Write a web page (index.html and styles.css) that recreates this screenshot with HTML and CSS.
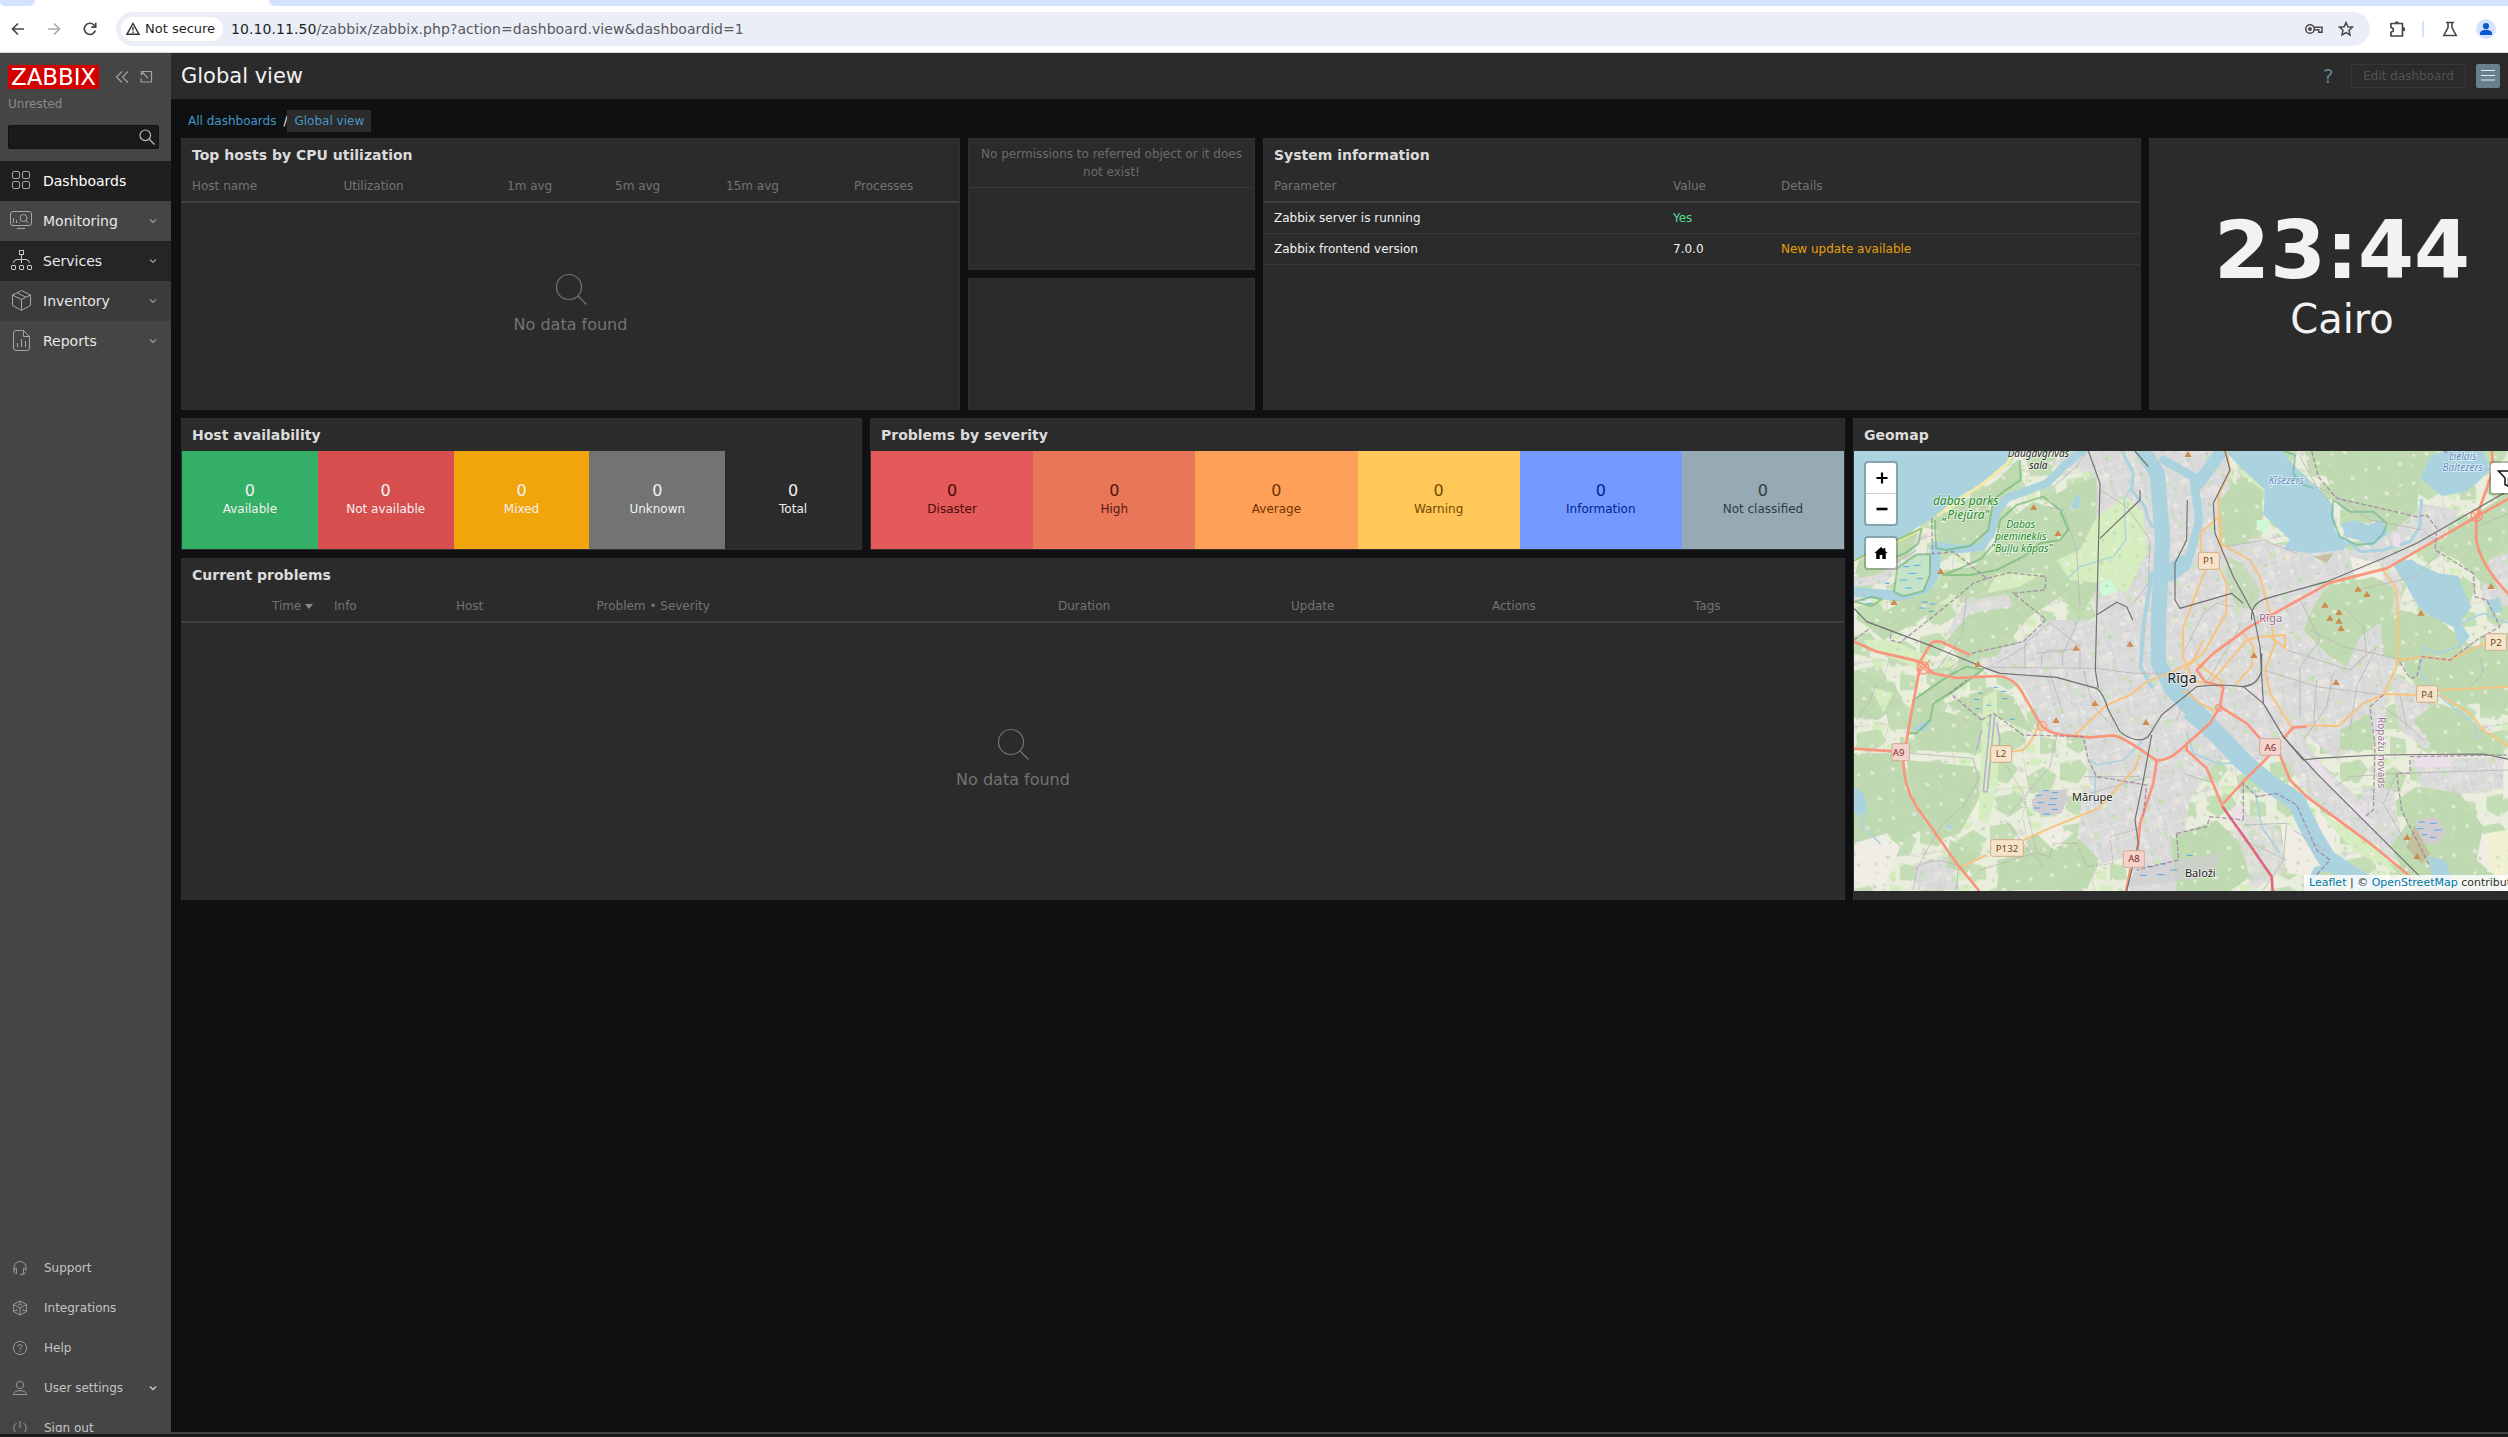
FILE: index.html
```html
<!DOCTYPE html>
<html lang="en">
<head>
<meta charset="utf-8">
<title>Global view</title>
<link rel="stylesheet" href="styles.css">
</head>
<body>
<div class="browser">
  <div class="tabstrip"><span class="tab-prev"></span><span class="tab-active"></span><span class="tab-rest"></span></div>
  <div class="toolbar">
    <div class="nav-icons">
      <svg width="20" height="20" viewBox="0 0 20 20"><path d="M16 10H5M10 4.500L4.500 10l5.500 5.500" fill="none" stroke="#474747" stroke-width="1.700"/></svg>
      <svg width="20" height="20" viewBox="0 0 20 20"><path d="M4 10h11M10 4.500l5.500 5.500-5.500 5.500" fill="none" stroke="#a9a9a9" stroke-width="1.700"/></svg>
      <svg width="20" height="20" viewBox="0 0 20 20"><path d="M15.300 11.500A5.600 5.600 0 1 1 14 6l1.500 1.500M15.700 3.800v4.400h-4.400" fill="none" stroke="#474747" stroke-width="1.700"/></svg>
    </div>
    <div class="omnibox">
      <div class="secure">
        <svg width="16" height="16" viewBox="0 0 16 16"><path d="M8 2.500L14 13.200H2z" fill="none" stroke="#333" stroke-width="1.500"/><path d="M8 6v3.500M8 10.500V12" stroke="#333" stroke-width="1.400"/></svg>
        <span>Not secure</span>
      </div>
      <div class="url"><b>10.10.11.50</b>/zabbix/zabbix.php?action=dashboard.view&amp;dashboardid=1</div>
      <svg class="key" width="20" height="20" viewBox="0 0 20 20"><g fill="none" stroke="#474747" stroke-width="1.500"><circle cx="6" cy="10" r="4.300"/><path d="M10 8.300h8v5h-3.300v-2.600H10.200"/></g><circle cx="6" cy="10" r="1.900" fill="#474747"/></svg>
      <svg class="star" width="18" height="18" viewBox="0 0 18 18"><path d="M9 2.500l1.900 4.300 4.600.4-3.500 3.100 1 4.600L9 12.500l-4 2.400 1-4.600L2.500 7.200l4.600-.4z" fill="none" stroke="#474747" stroke-width="1.500"/></svg>
    </div>
    <svg class="puzzle" width="20" height="20" viewBox="0 0 20 20"><path d="M3 4.500h11.500v12.500H3v-3.800l2.200-1.200v-2.500L3 8.500z" fill="none" stroke="#474747" stroke-width="1.700" stroke-linejoin="round"/><path d="M7 4V2.500h3.500V4zM15 8.500h2v3.500h-2z" fill="#474747"/></svg>
    <span class="tb-sep"></span>
    <svg class="flask" width="18" height="18" viewBox="0 0 18 18"><path d="M5 2.500h8M7 2.500v5L2.800 15.500h12.400L11 7.500v-5" fill="none" stroke="#474747" stroke-width="1.600"/></svg>
    <svg class="avatar" width="20" height="20" viewBox="0 0 20 20"><circle cx="10" cy="10" r="10" fill="#d3e3fd"/><circle cx="10" cy="7" r="3.100" fill="#0b57d0"/><path d="M4 16v-1.500c0-5 12-5 12 0V16z" fill="#0b57d0"/></svg>
  </div>
</div>

<div class="app">
  <aside class="sidebar">
    <div class="brand">
      <div class="logo">ZABBIX</div>
      <svg class="collapse" width="40" height="16" viewBox="0 0 40 16"><path d="M8 2.500L2.500 8 8 13.500M14 2.500L8.500 8l5.500 5.500M31 2.500h6.500V13H27V9.500M27.500 2.500l6.500 6.500M27.500 6.500v-4h4" fill="none" stroke="#a2a2a2" stroke-width="1.200"/></svg>
    </div>
    <div class="server">Unrested</div>
    <div class="search"><svg width="18" height="18" viewBox="0 0 18 18"><circle cx="7.300" cy="7.300" r="5.300" fill="none" stroke="#b8b8b8" stroke-width="1.200"/><path d="M11 11l5.500 5.500" stroke="#b8b8b8" stroke-width="1.200"/></svg></div>
    <nav class="menu">
      <div class="item active"><svg class="ico" width="24" height="24" viewBox="0 0 24 24"><rect x="3.500" y="2.500" width="7" height="7" rx="1.500"/><rect x="13.500" y="2.500" width="7" height="7" rx="1.500"/><rect x="3.500" y="12.500" width="7" height="7" rx="1.500"/><rect x="13.500" y="12.500" width="7" height="7" rx="1.500"/></svg><span>Dashboards</span></div>
      <div class="item"><svg class="ico" width="24" height="24" viewBox="0 0 24 24"><rect x="1.500" y="2.500" width="21" height="14" rx="2.500"/><path d="M8 19.500h8M4.500 14V9M7.500 14v-3M10.500 14v-1"/><circle cx="14.500" cy="9" r="3.500"/><path d="M17 11.500l2.500 2.500"/></svg><span>Monitoring</span><svg class="chev" width="8" height="6" viewBox="0 0 8 6"><path d="M1 1.500l3 3 3-3"/></svg></div>
      <div class="item services"><svg class="ico bright" width="24" height="24" viewBox="0 0 24 24"><rect x="10.500" y="1.500" width="4" height="4"/><rect x="2.500" y="16.500" width="4" height="4" rx=".5"/><rect x="10.500" y="16.500" width="4" height="4" rx=".5"/><rect x="18.500" y="16.500" width="4" height="4" rx=".5"/><path d="M12.500 5.500V14M4.500 14q0-3.500 3.500-3.500h9q3.500 0 3.500 3.500"/></svg><span>Services</span><svg class="chev" width="8" height="6" viewBox="0 0 8 6"><path d="M1 1.500l3 3 3-3"/></svg></div>
      <div class="item inventory"><svg class="ico" width="24" height="24" viewBox="0 0 24 24"><path d="M12.500 1.500l9 4.500v10.500l-9 4.800-9-4.800V6zM3.500 6l9 4.500L21.500 6M12.500 10.500v10.500M8 3.800l9 4.500"/></svg><span>Inventory</span><svg class="chev" width="8" height="6" viewBox="0 0 8 6"><path d="M1 1.500l3 3 3-3"/></svg></div>
      <div class="item"><svg class="ico" width="24" height="24" viewBox="0 0 24 24"><path d="M14.500 1.500H7q-2.500 0-2.500 2.500v15q0 2.500 2.500 2.500h11q2.500 0 2.500-2.500V7.500zM14.500 1.500v6h6M8.500 18v-4M12.500 18v-8M16.500 18v-6"/></svg><span>Reports</span><svg class="chev" width="8" height="6" viewBox="0 0 8 6"><path d="M1 1.500l3 3 3-3"/></svg></div>
    </nav>
    <nav class="menu menu-user">
      <div class="item"><svg class="ico" width="16" height="16" viewBox="0 0 16 16"><path d="M2 11V7.500a6 6 0 0 1 12 0V11M2 8.500h2.500v5H3.500Q2 13.500 2 11zM14 8.500h-2.500v5h1M13.500 12v.5q0 2-5.500 2"/></svg><span>Support</span></div>
      <div class="item"><svg class="ico" width="16" height="16" viewBox="0 0 16 16"><path d="M8 1l6.500 3.500v7L8 15l-6.500-3.500v-7zM1.500 4.500L8 8l6.500-3.500M8 8v7M4 9.500l1.500 1M12 9.500l-1.500 1M1.500 11.500L5 9.500M14.500 11.500L11 9.500M8 1v2.500M6 5l2-1 2 1"/></svg><span>Integrations</span></div>
      <div class="item"><svg class="ico" width="16" height="16" viewBox="0 0 16 16"><circle cx="8" cy="8" r="6.600"/><path d="M6 6.500Q6 4.500 8 4.500t2 1.800Q10 7.500 8 8.500v1.300M8 11v1.200"/></svg><span>Help</span></div>
      <div class="item"><svg class="ico" width="16" height="16" viewBox="0 0 16 16"><circle cx="8" cy="5" r="3.600"/><path d="M1.500 14.500v-1Q3 10.500 8 10.500t6.500 3v1z"/></svg><span>User settings</span><svg class="chev light" width="8" height="6" viewBox="0 0 8 6"><path d="M1 1.500l3 3 3-3"/></svg></div>
      <div class="item"><svg class="ico" width="16" height="16" viewBox="0 0 16 16"><path d="M8 1v7M4.500 3a6.200 6.200 0 1 0 7 0"/></svg><span>Sign out</span></div>
    </nav>
  </aside>

  <main class="main">
    <header class="header">
      <h1>Global view</h1>
      <span class="help">?</span>
      <button class="edit">Edit dashboard</button>
      <button class="burger"><svg width="24" height="24" viewBox="0 0 24 24"><path d="M5 6.500h14M5 11.500h14M5 16h14" stroke="#e6ebee" stroke-width="1"/></svg></button>
    </header>
    <div class="crumbs"><a>All dashboards</a><i>/</i><a class="current">Global view</a></div>

    <div class="dashboard">
      <div class="row top">
        <section class="widget w-hosts">
          <h2>Top hosts by CPU utilization</h2>
          <div class="thead hosts-cols"><span>Host name</span><span>Utilization</span><span>1m avg</span><span>5m avg</span><span>15m avg</span><span>Processes</span></div>
          <div class="nodata"><svg width="34" height="34" viewBox="0 0 34 34"><circle cx="15" cy="15" r="12.500"/><path d="M24 24l8.500 8.500"/></svg><span>No data found</span></div>
        </section>
        <div class="stack">
          <section class="widget"><p class="noperm">No permissions to referred object or it does not exist!</p></section>
          <section class="widget"></section>
        </div>
        <section class="widget w-system">
          <h2>System information</h2>
          <div class="thead sys-cols"><span>Parameter</span><span>Value</span><span>Details</span></div>
          <div class="trow sys-cols"><span>Zabbix server is running</span><span class="green">Yes</span><span></span></div>
          <div class="trow sys-cols"><span>Zabbix frontend version</span><span>7.0.0</span><span class="orange">New update available</span></div>
        </section>
        <section class="widget w-clock"><div class="time">23:44</div><div class="city">Cairo</div></section>
      </div>

      <div class="row bottom">
        <div class="left">
          <div class="row totals">
            <section class="widget w-avail">
              <h2>Host availability</h2>
              <div class="tiles">
                <div class="tile available"><b>0</b><span>Available</span></div>
                <div class="tile notavailable"><b>0</b><span>Not available</span></div>
                <div class="tile mixed"><b>0</b><span>Mixed</span></div>
                <div class="tile unknown"><b>0</b><span>Unknown</span></div>
                <div class="tile"><b>0</b><span>Total</span></div>
              </div>
            </section>
            <section class="widget w-sev">
              <h2>Problems by severity</h2>
              <div class="tiles">
                <div class="tile disaster"><b>0</b><span>Disaster</span></div>
                <div class="tile high"><b>0</b><span>High</span></div>
                <div class="tile average"><b>0</b><span>Average</span></div>
                <div class="tile warning"><b>0</b><span>Warning</span></div>
                <div class="tile information"><b>0</b><span>Information</span></div>
                <div class="tile unclassified"><b>0</b><span>Not classified</span></div>
              </div>
            </section>
          </div>
          <section class="widget w-problems">
            <h2>Current problems</h2>
            <div class="thead prob-cols"><span class="sorted">Time</span><span>Info</span><span>Host</span><span>Problem • Severity</span><span>Duration</span><span>Update</span><span>Actions</span><span>Tags</span></div>
            <div class="nodata"><svg width="34" height="34" viewBox="0 0 34 34"><circle cx="15" cy="15" r="12.500"/><path d="M24 24l8.500 8.500"/></svg><span>No data found</span></div>
          </section>
        </div>

        <section class="widget w-map">
          <h2>Geomap</h2>
          <div class="map">
            <svg width="656" height="440" viewBox="12 33 1968 1320">
              <defs>
                <pattern id="land" width="210" height="190" patternUnits="userSpaceOnUse">
                  <rect width="210" height="190" fill="#e9eddb"/>
                  <path d="M0 20l60-12 24 30-30 42-54-10zM110 60l50-30 40 26-20 50-60 4zM20 120l70-14 20 40-54 34-36-20zM150 130l46 8 4 40-50 4z" fill="#c3ddb5"/>
                  <path d="M66 84l40 4-6 26-34-4zM120 4l40 6-14 18-26-4zM110 150l28 6v24l-30-4z" fill="#d6edc0"/>
                  <path d="M90 30l14 6-4 12-14-4zM8 92l18 4-6 12-14-2z" fill="#dcdad7"/>
                  <path d="M0 104L90 90l120 20M100 0l16 90-20 100" fill="none" stroke="#cfcbc6" stroke-width="2"/>
                </pattern>
                <pattern id="city" width="150" height="130" patternUnits="userSpaceOnUse" patternTransform="rotate(-17)">
                  <rect width="150" height="130" fill="#dadada"/>
                  <path d="M10 14h26v16H10zM80 60h34v18H80zM30 96h20v16H30z" fill="#e6e3dd"/>
                  <path d="M54 40h16v20H54zM118 8h18v12h-18zM98 100h12v14H98z" fill="#cde2c1"/>
                  <path d="M12 70h10v8H12zM84 22h8v8h-8z" fill="#f3dccb"/>
                  <path d="M0 36h150M0 84h150M44 0v130M74 36v48M100 0v130M0 118h44M126 36v94" fill="none" stroke="#e8e8e8" stroke-width="2"/>
                  <path d="M0 60h44M100 50h50M20 36v48M60 84v46M112 84v46M44 12h56" fill="none" stroke="#cbcbcb" stroke-width="1.500"/>
                </pattern>
                <pattern id="flecks" width="113" height="97" patternUnits="userSpaceOnUse" patternTransform="rotate(24)">
                  <path d="M8 10l9-3 5 7-8 5zM60 70l12-2 3 8-11 4zM92 30l7 1-2 9-7-2z" fill="#f2efe9"/>
                  <path d="M40 28l10-4 5 6-7 7zM84 84l9-2 4 7-10 2zM20 60l6-2 4 8-8 1z" fill="#b8d7aa"/>
                  <path d="M70 8l8 3-3 6-7-2zM34 82l6-1 1 8-7-1z" fill="#d0d2cf"/>
                  <path d="M52 52l4-1 1 5-5 1z" fill="#9fd2e6"/>
                  <path d="M100 60l6 1-1 6-6-1z" fill="#f3dccb"/>
                </pattern>
                <g id="peak"><path d="M0-9L11 9H-11z" fill="#cf8a50"/></g>
              </defs>
              <rect x="12" y="33" width="1968" height="1320" fill="url(#land)"/>

              <!-- built-up areas -->
              <g fill="url(#city)">
                <path d="M590 70L700 33H1135L1140 200 1290 430 1480 440 1660 380 1640 640 1600 860 1460 960 1350 870 1250 960 1100 960 1020 1080 980 1353H840L880 1120 720 1040 700 890 590 880 520 740 410 690 520 600 600 540 740 540 720 420 720 100z"/>
                <path d="M400 430l80-40 100 10 10 40-90 40-60 60-90 60-60-20 60-100zM12 400l90-60 110-60-20 70-90 80-90 10zM380 640l140-30 10 70-120 10zM700 1040l180 40-10 160-150 40-40-60zM1240 780l90 60 80 130 120 110 180 160 70 80-90-20-300-210-120-180zM1620 700l90 40 60 130-40 60-80-60zM1680 960l290-10v90l-240 40zM1540 1040l90 10 30 180-60-40-80-60zM1130 270l120 40 260 20 110-50 90-90 120 20-60 90-180 90-300 60zM190 1270l110-20 30 100H200zM1900 360l75-20v160l-80-30z"/>
                <path d="M1170 1110l120 60 20 120-100 60-60-120z" opacity=".8"/>
              </g>
              <g fill="#f0ede5">
                <path d="M240 1010l60-20 40 30-50 70-60-20zM20 1190l70-20 60 50-50 130-88-30zM560 1180l60-30 50 30-60 50zM1400 1110l60 30-10 110-40-60zM1960 960h18v120h-18zM1290 1140l90 50 30 120-100-10zM1500 350l90 20 20 80-90-20zM1850 1170l110 20-20 110-60 10z"/>
                <path d="M345 1130l40-100 34 110z" fill="#eff0d9"/>
                <path d="M1910 1180l66-10v180l-60-60z" fill="#f1f2d4"/>
              </g>

              <!-- woods -->
              <g fill="#bfdab1">
                <path d="M262 235l70-45 110-70 62-62 14 50-50 50-30 50-12 60-40 50-80 10-44-8z"/>
                <path d="M280 390l90-10 60-50 20-60 40-40 60-45 60 20 40 60 10 60-70 70-80 60-120 20-90-10z"/>
                <path d="M600 170l60-30 80-30v340l-50 80-60-60-90 60-80 90-20 30-110 10-40-60 70-80 130-20-40-80 140-60 50-90z"/>
                <path d="M30 345l180-80-30 80-100 60-68 10zM40 550l180-100 110-10-120 100-110 60zM190 780l140-110 70 20-130 100-30 60-60 34z"/>
                <path d="M12 940h140l20 110 60 110-90 50-60-60-70-20zM190 870l80-60 130 40-20 90-180-10zM290 790l130-50 70 30 60 110-110-50-60 10zM170 960l210 20 10 90-60 110-70 20-70-110z"/>
                <path d="M450 1270l60-50 130 10 50 120H440zM620 1220l70-20 60 60-40 90-60-30zM960 1190l140-50 70 70 30 100-60 43H980z"/>
                <path d="M12 1080l80 20 20 80-100 30zM300 1200l90 40-40 60-60-20zM12 690l120 40 30 60-80 50-70-10z"/>
                <path d="M1110 180l60-70 60 10 10 110-50 80-60 10-20-40z"/>
                <path d="M1360 33h390l-40 80-10 100-70 60-100-30-60-40-40-90z"/>
                <path d="M1430 440l140-30 70 40-20 80-90 60-40 90-50-30-80-80 30-70z"/>
                <path d="M1590 540l60-30 110 20 100 90 80-10 40-40v260l-100-40-70 10-60-60-40 20-60-100-50-10z"/>
                <path d="M1470 870l90-50 10 110h-100zM1800 280l80-60 95-60v150l-60 60 30 80-60-30-60-60-70-30zM1760 790l70 20 130 110v30l-200-10-70-100z"/>
                <path d="M1640 1080l60-40 130 20 70 100-20 100 70 60-20 33h-230l-80-130 50-70zM1400 1290l60 20 40 43h-130z"/>
                <path d="M1130 350l50 20 50 80-10 60-60-10-30-70z" opacity=".8"/>
              </g>
              <g fill="#d6edc0">
                <path d="M740 230l90-60 50 50 10 120-60 120-80-30-90-10-40-60 70-30z"/>
                <path d="M400 770l40-20 6 260-30 140-30-10zM440 400l140 0-70 40-100 20zM40 600l90 0 120 60-30 30-160-60zM1160 60l70 40 20 60-80-60zM1400 1110l180 110 60 80-130-70zM60 740l70 20-30 60z"/>
              </g>
              <path d="M750 430l36-14 14 40-40 14-12-16zM1220 240l40 0-10 40-30-10z" fill="#cff8d7"/>
              <rect x="12" y="33" width="1968" height="1320" fill="url(#flecks)" opacity=".75"/>

              <!-- marsh ticks -->
              <g fill="#cfcdd0"><path d="M545 1080l30-30 70 0 10 20-20 50-50 10-36-20zM1700 1140l60-10 30 50-30 30-40 0-22-30z"/></g>
              <path d="M850 1300l120-40 140-20-20 70-260 30z" fill="#cfcdd0" opacity=".7"/>
              <path d="M580 1052h16M606 1058h18M556 1066h20M600 1076h22M562 1088h20M594 1094h24M552 1104h18M606 1108h18M580 1122h20M1706 1146h18M1740 1150h20M1700 1166h20M1752 1170h22M1716 1184h16M1740 1192h18M430 742h14M452 754h18M386 760h12M372 778h16M456 776h16M410 796h14M376 806h14M480 838h14M890 1280h20M930 1272h18M960 1290h22M870 1306h20M920 1304h24M1010 1246h18M215 486h18M240 492h16M206 504h20M236 514h16M160 380h20M190 370h18M170 402h18M204 394h20M160 424h18M200 416h20M104 430h14M30 480h16M50 490h18" stroke="#3c9cf5" stroke-width="2.500"/>
              <path d="M1670 1222l24-66 46 86-24 30zM1390 350l60-10-20 30z" fill="#c3b998" opacity=".85"/>

              <!-- water -->
              <g fill="#aad3df">
                <path d="M12 33H500L470 65 400 125 325 172 255 228 165 285 90 325 12 360z"/>
                <path d="M1125 33H1295L1345 90 1420 160 1450 200 1455 270 1495 315 1480 330 1380 340 1300 328 1320 300 1280 260 1240 225 1245 150 1175 85z"/>
                <path d="M1625 370L1685 358 1700 370 1765 400 1825 408 1845 460 1865 500 1830 545 1860 590 1830 622 1810 560 1745 530 1705 500 1665 430z"/>
                <path d="M1745 45L1790 33H1900L1920 90 1880 130 1845 155 1775 168 1710 115z"/>
                <path d="M1475 250l40-10 40 15 40-15 20 40-50 40-40-20-40-10z"/>
                <path d="M1910 480l40-5 6 40-30 6zM670 180l20-20-2 44-24 4zM12 1040l30 20 10 50-30 20-10-20zM290 1150l20 10-16 14zM1735 1250l50 10 20 50-40 43-20-40zM185 870l30-20 30-12-20 36z"/>
              </g>
              <g fill="none" stroke="#aad3df" stroke-linecap="round" stroke-linejoin="round">
                <path d="M700 30L640 80 590 130 530 152 470 175 440 215 425 275 395 320 330 328 270 318" stroke-width="24"/>
                <path d="M256 320L255 400 225 445 150 468 80 462 0 455" stroke-width="30"/>
                <path d="M870 20L922 100 938 300 925 540 925 670 970 750" stroke-width="46"/>
                <path d="M965 740L1060 840 1180 965 1250 1025 1340 1085 1385 1180 1430 1255 1510 1310 1600 1360" stroke-width="56"/>
                <path d="M1010 830L1090 900 1150 950 1180 970" stroke-width="14"/>
                <path d="M940 60L1030 110 1048 240 1025 330 1010 370" stroke-width="26"/>
                <path d="M1045 130L1095 60 1110 40" stroke-width="38"/>
                <path d="M1000 370L960 400" stroke-width="50"/>
                <path d="M815 33L850 100 845 150 885 200 895 240 910 260" stroke-width="9"/>
                <path d="M850 130L822 180 828 300 790 350 690 380 655 415" stroke-width="4"/>
                <path d="M905 400L880 560 872 680 905 740" stroke-width="12"/>
                <path d="M1490 300L1530 335 1600 330 1680 305 1710 260 1715 180" stroke-width="9"/>
                <path d="M1830 550L1900 520 1950 540 1978 550M1830 620L1760 640 1720 620 1710 700 1760 760 1830 820 1875 850 1880 900M720 960L740 975 820 960 850 930 910 870M735 1000V1090M1215 1050L1235 1160 1290 1240M1010 880L1030 940 1100 970 1170 970M20 1060L50 1120 30 1150 90 1210" stroke-width="5"/>
                <path d="M1370 1353L1400 1290 1450 1280" stroke-width="20"/>
              </g>
              <path d="M12 362L90 330 160 294 220 262M262 228L330 178 400 130 470 72 495 36" fill="none" stroke="#f5e9a6" stroke-width="8"/>
              <path d="M132 455l20-80 30-20 20-12 38 0 0 60-20 50-60 16z" fill="#c5e3c8"/>
              <path d="M150 420h22M175 400h24M190 376h22M160 380h18M200 416h18M165 444h20" stroke="#3c9cf5" stroke-width="2.500"/>
              <g fill="none" stroke="#6fb56f" stroke-opacity=".65" stroke-width="6" stroke-linejoin="round">
                <path d="M510 60L512 120 460 155 430 180 415 270 360 318 290 330 258 325 255 240"/>
                <path d="M280 405L330 385 395 355 440 300 450 240 500 195 580 170 630 210 655 270 630 300 570 310 520 350 440 390 360 405z"/>
                <path d="M12 362L120 310 215 265 205 310 165 340 100 365M132 455l10-70 40-30 20-12 38 0 0 60-20 50-60 16zM15 485l50-15 30 8-30 20zM175 880L190 780 300 705 350 680 400 688 330 740 250 790 240 840 200 880z"/>
                <path d="M1300 33L1335 45 1330 100 1350 130 1390 145M1450 180L1445 230 1470 290 1520 315 1570 310 1600 280 1610 250 1570 215 1500 215z" stroke="#6fb59a"/>
              </g>

              <!-- minor roads -->
              <g fill="none" stroke="#b9b7b7" stroke-width="2.500">
                <path d="M180 940L370 955 385 1020 340 1100 280 1150 230 1230 200 1290 190 1350M525 680V610L600 548 690 620V690M575 680V645Q605 610 638 645V680M410 682L740 685 850 700 1000 700M690 530L640 640M590 200L640 210 680 330 690 500M610 140L680 80 710 33M750 150L830 200 900 300 895 430 850 490M560 640L690 625M600 700L640 820M700 690L730 800 800 870M440 670L525 620M480 1120L600 980 620 890M465 1140L550 1250M390 1290L550 1240 580 1280M190 1290Q250 1240 325 1280L320 1350M20 840L60 780 80 730M350 470L335 590 260 690M290 690L400 620M120 380L200 330M700 1010H870M720 1060L900 1010"/>
                <path d="M1000 640L1060 520 1100 490 1150 500M1310 630L1500 690 1580 620 1520 740 1500 870M1240 690L1400 740 1600 765M1350 480L1410 600 1350 680 1350 830M1380 570L1480 620 1660 660M1400 720L1390 860M1450 700L1430 800 1360 900M1480 500L1540 560 1550 640 1500 690M1520 450L1700 410 1780 320M1440 1050L1500 1010 1640 1000 1978 990M1600 800L1680 860 1720 900M1650 765L1670 860M1180 1155L1310 1150 1300 1260 1240 1350M1000 1000L1090 1030M1180 1200L1310 1260M1330 1170L1440 1240M1640 1000L1600 1090 1680 1230M1390 130L1450 200M1350 50L1400 140 1480 180 1560 240 1720 270 1760 310M1850 750L1900 700 1890 650M1880 260L1978 220M1130 320L1240 300 1340 340M1020 740L980 840M1060 740L1100 680 1170 560"/>
              </g>
              <g fill="none" stroke="#b6b2cb" stroke-width="5"><path d="M422 825L400 1055M434 825L412 1055M400 1055H412M440 850L450 900 440 960M395 870L380 930"/></g>
              <path d="M1205 740l40 25 30 50-30-20-40-50zM1350 930l60 40 60 90 120 100-50-20-130-130zM1695 950h110v30h-110zM1150 1100h30v40h-30zM1630 280h20v40h-20z" fill="#ecdfec"/>

              <!-- main roads -->
              <g fill="none" stroke="#f7c47f" stroke-width="6" stroke-linejoin="round">
                <path d="M325 1285L410 1245M520 1200L610 1160 745 1105 800 1045 855 985 870 945M485 935L520 930 545 900 570 850M670 890L770 795 840 765 890 725 970 695 1030 660 1060 600"/>
                <path d="M1130 33L1140 90 1105 170 1108 230 1050 280 1055 340M1068 385L1000 560 998 650 1030 720 1060 730M1105 170L1110 310 1200 360 1230 410 1260 520 1275 610 1245 690 1260 760 1330 870M1105 380L1130 430 1128 520 1060 640 1000 690M1110 230L1115 340"/>
                <path d="M1600 390L1640 450 1645 560 1640 680 1600 765 1540 790 1465 858 1370 856M1600 762L1700 765M1640 662L1720 650 1800 660 1905 610M1770 750L1978 740M1770 765L1860 820 1900 870 1978 920M1180 580L1210 620 1205 680 1155 735M1190 600L1140 660 1080 730M1190 600L1230 590 1305 585V625L1260 590M1040 670L1110 720 1120 740M1000 750L1050 790 1090 810"/>
              </g>
              <g fill="none" stroke="#fa957c" stroke-width="8" stroke-linejoin="round">
                <path d="M12 605L80 635 210 665 240 615Q250 600 275 606L360 645M210 665L250 700 320 714 440 708Q490 710 515 755L570 850Q590 880 640 885L720 892 790 886Q820 890 920 962Q960 960 990 930L1080 850 1110 800 1120 740 1065 725 1040 690 1090 640 1200 560 1300 505 1440 428 1610 385 1750 305 1880 230 1978 175"/>
                <path d="M210 680L175 870 160 960Q160 1040 200 1100L320 1270 388 1353M12 926L130 934M920 962L910 1030 870 1150 862 1240M842 1285L828 1353M1110 800L1190 850 1230 895M1280 925L1180 1025 1120 1090M1010 910L1010 930 1070 985 1118 1100M1290 945L1320 1020 1370 1070 1560 1210 1700 1325M1300 895L1330 862 1370 860M1880 230L1878 290Q1885 370 1978 465M1880 230L1930 90 1925 33"/>
              </g>
              <path d="M1118 1100L1210 1230 1265 1310 1268 1353" fill="none" stroke="#e2657f" stroke-width="8"/>
              <g fill="none" stroke="#fa957c" stroke-width="4"><circle cx="219" cy="684" r="18"/><path d="M198 665l42 38M240 660l-40 48"/><circle cx="576" cy="858" r="14"/><circle cx="1880" cy="227" r="17"/><path d="M1865 215l30 24M1895 212l-32 30"/><circle cx="1107" cy="803" r="10"/></g>

              <!-- railways -->
              <g fill="none" stroke="#6f6f6f" stroke-width="3.500" stroke-linejoin="round">
                <path d="M12 505L50 545 250 620 400 682 450 700 620 712 740 745Q760 760 775 810L810 875Q860 915 895 890L935 825 1040 740Q1110 730 1180 740L1240 790 1300 890 1400 1000 1710 1310"/>
                <path d="M715 33L750 130 736 690 745 745M750 295L870 180V150M740 525L800 487 830 500 848 540M905 885L880 1020 855 1140 865 1210 830 1353M855 33L895 80M1012 180L1010 300 975 370V480L990 505 1145 460 1180 490M1125 33L1140 90 1090 190 1095 280 1150 410 1210 520 1230 620 1240 790M1205 540Q1200 490 1250 475L1430 425 1600 355 1700 310 1978 150M1235 640V690Q1225 735 1180 740M1300 890L1360 960 1400 955 1580 945 1900 942 1978 958"/>
              </g>

              <!-- administrative boundaries -->
              <g fill="none" stroke="#9b7a9b" stroke-opacity=".75" stroke-width="4" stroke-dasharray="14 6">
                <path d="M245 235L248 342 310 335 410 415 480 398 588 410 585 450 490 460 588 538 520 605 365 640M410 415L370 430 280 505 150 608 120 600 125 570M12 600L60 565M395 840L300 760 350 720M395 840L430 820 520 885 700 890 715 960 740 1010 890 1035 880 1130M1385 33L1405 110 1460 175 1700 230 1730 225 1760 265 1755 330 1870 400 1875 470 1910 480 1950 560 1880 600 1800 660 1715 650 1700 710 1680 715 1645 660M1600 765L1560 800 1575 920 1570 1110 1545 1130M1780 33L1850 60M1680 960L1680 1000 1640 1000 1655 1110 1740 1280M1680 950L1970 945M1180 1140V1030L1220 1070 1280 1060 1340 1095 1400 1230 1440 1260 1395 1310M980 1180L1070 1160 1080 1130 1180 1140M980 1180L985 1260 860 1290"/>
                <path d="M470 980L520 1060 560 1240 600 1250 610 1210 680 1210 710 1280 790 1270 780 1190 870 1165" stroke-width="3" stroke-dasharray="3 5"/>
              </g>

              <g>
                <use href="#peak" x="551" y="201"/><use href="#peak" x="624" y="279"/><use href="#peak" x="272" y="393"/><use href="#peak" x="132" y="486"/><use href="#peak" x="678" y="623"/><use href="#peak" x="840" y="611"/><use href="#peak" x="384" y="672"/><use href="#peak" x="735" y="789"/><use href="#peak" x="618" y="840"/><use href="#peak" x="888" y="846"/><use href="#peak" x="1014" y="42"/><use href="#peak" x="1524" y="446"/><use href="#peak" x="1551" y="462"/><use href="#peak" x="1425" y="494"/><use href="#peak" x="1467" y="516"/><use href="#peak" x="1440" y="533"/><use href="#peak" x="1467" y="542"/><use href="#peak" x="1473" y="564"/><use href="#peak" x="1713" y="518"/><use href="#peak" x="1923" y="438"/><use href="#peak" x="1212" y="645"/><use href="#peak" x="1458" y="726"/><use href="#peak" x="1671" y="1191"/><use href="#peak" x="1701" y="1248"/>
              </g>

              <!-- road shields -->
              <g class="shield-p"><rect x="1045" y="337" width="63" height="51" rx="6"/><rect x="422" y="917" width="63" height="50" rx="6"/><rect x="422" y="1199" width="98" height="50" rx="6"/><rect x="1906" y="581" width="64" height="50" rx="6"/><rect x="1700" y="737" width="63" height="50" rx="6"/></g>
              <g class="shield-a"><rect x="126" y="911" width="52" height="51" rx="3"/><rect x="820" y="1232" width="63" height="50" rx="6"/><rect x="1229" y="896" width="63" height="50" rx="6"/></g>
              <g class="lbl shield-text"><text x="1076" y="373">P1</text><text x="453" y="952">L2</text><text x="471" y="1235">P132</text><text x="1938" y="617">P2</text><text x="1731" y="773">P4</text><text class="at" x="146" y="948">A9</text><text class="at" x="852" y="1267">A8</text><text class="at" x="1261" y="932">A6</text></g>

              <g class="lbl">
                <text class="dark it" x="565" y="52" font-size="30">Daugavgrīvas</text><text class="dark it" x="565" y="86" font-size="30">sala</text>
                <text class="park it" x="347" y="195" font-size="36">dabas parks</text><text class="park it" x="347" y="238" font-size="36">„Piejūra"</text>
                <text class="park it" x="512" y="265" font-size="31">Dabas</text><text class="park it" x="512" y="301" font-size="31">piemineklis</text><text class="park it" x="515" y="337" font-size="31">"Buļļu kāpas"</text>
                <text class="lake it" x="1309" y="133" font-size="30">Ķīšezers</text><text class="lake it" x="1838" y="59" font-size="30">Lielais</text><text class="lake it" x="1838" y="94" font-size="30">Baltezers</text>
                <text class="admin" x="1262" y="547" font-size="34">Rīga</text>
                <text class="dark" x="996" y="730" font-size="43">Rīga</text>
                <text class="dark" x="727" y="1083" font-size="33">Mārupe</text><text class="dark" x="1051" y="1310" font-size="33">Baloži</text>
                <text class="admin" transform="translate(1585 938) rotate(90)" font-size="30">Ropažu novads</text>
              </g>
            </svg>
            <div class="zoom"><span><svg width="30" height="30" viewBox="0 0 30 30"><path d="M16 9.500v11M10.500 15h11" stroke="#000" stroke-width="2.200"/></svg></span><span><svg width="30" height="30" viewBox="0 0 30 30"><path d="M10.500 15h11" stroke="#000" stroke-width="2.600"/></svg></span></div>
            <div class="home"><svg width="14" height="14" viewBox="0 0 14 14"><path d="M7 1L.5 7H2.200v6h3.500V9h2.600v4h3.500V7h1.700L11.300 5V2H9.600v1.400z"/></svg></div>
            <div class="filter"><svg width="20" height="20" viewBox="0 0 20 20"><path d="M1.500 2h16l-6 7v8.500l-3.500-2V9z" fill="none" stroke="#111" stroke-width="1.500"/></svg></div>
            <div class="attrib"><a>Leaflet</a> | © <a>OpenStreetMap</a> contributors</div>
          </div>
        </section>
      </div>
    </div>
  </main>
</div>
<footer class="edge"></footer>
</body>
</html>
```
FILE: styles.css
```css
* { box-sizing: border-box; }
html, body { margin: 0; height: 100%; overflow: hidden; }
body { display: flex; flex-direction: column; background: #0e1012; color: #f2f2f2; font: 12px/18px "DejaVu Sans", sans-serif; }
svg { display: block; flex: none; }
button { font: inherit; }

/* browser chrome */
.browser { height: 53px; flex: none; background: #fff; color: #1f1f1f; border-bottom: 1px solid #d5dbd9; }
.tabstrip { display: flex; height: 6px; background: #fff; }
.tab-prev { width: 35px; background: #d3e3fd; border-radius: 0 0 8px 6px; }
.tab-active { width: 234px; }
.tab-rest { flex: 1; background: #d3e3fd; border-radius: 0 0 0 8px; }
.toolbar { display: flex; align-items: center; height: 46px; padding-right: 12px; }
.nav-icons { display: flex; gap: 16px; width: 116px; padding-left: 8px; }
.omnibox { display: flex; align-items: center; width: 2254px; height: 34px; padding: 0 15px 0 5px; background: #ebeef7; border-radius: 17px; }
.secure { display: flex; align-items: center; gap: 4px; width: 102px; height: 24px; padding-left: 4px; border-radius: 12px; background: #fff; font-size: 13px; white-space: nowrap; }
.url { flex: 1; padding-left: 8px; font-size: 14px; letter-spacing: .07px; color: #55585c; }
.url b { font-weight: 400; color: #1f1f1f; }
.star { margin-left: 13px; }
.puzzle { margin-left: 18px; }
.tb-sep { width: 2px; height: 16px; margin-left: 14px; background: #d3e3fd; }
.flask { margin-left: 17px; }
.avatar { margin-left: auto; }

.app { display: flex; flex: 1; min-height: 0; overflow: hidden; }
.edge { flex: none; height: 5px; background: #1a1a1a; border-top: 2px solid #444; }

/* sidebar */
.sidebar { display: flex; flex-direction: column; flex: none; width: 171px; height: 1379px; background: #454545; }
.brand { display: flex; align-items: center; height: 24px; margin: 12px 0 0 8px; }
.logo { width: 91px; height: 24px; background: #d40000; color: #fff; font-size: 23px; line-height: 24px; text-align: center; letter-spacing: -.1px; }
.collapse { margin-left: 15px; }
.server { margin: 6px 8px 0; color: #8a8a8a; }
.search { display: flex; justify-content: flex-end; width: 151px; height: 24px; margin: 12px 8px; padding: 2px 2px; background: #1a1a1a; border: 1px solid #0b1418; border-radius: 2px; }
.menu { display: flex; flex-direction: column; }
.item { display: flex; flex: none; align-items: center; height: 40px; padding: 0 14px 0 9px; font-size: 14px; color: #e8e8e8; }
.item .chev { margin-left: auto; }
.ico { margin-right: 10px; fill: none; stroke: #a6a6a6; stroke-width: 1; }
.ico.bright { stroke: #c8c8c8; }
.chev { fill: none; stroke: #999; stroke-width: 1.2; }
.chev.light { stroke: #c8c8c8; stroke-width: 1.5; }
.active { background: #1f1f1f; color: #fff; }
.services { background: #252525; }
.inventory { background: #3b3b3b; }
.menu-user { margin-top: auto; margin-bottom: -16px; }
.menu-user .item { padding-left: 12px; font-size: 12px; color: #c4c4c4; }
.menu-user .ico { margin-right: 16px; stroke: #999; }

/* page header */
.main { flex: 1; min-width: 0; overflow: hidden; }
.header { display: flex; align-items: center; height: 46px; padding: 0 8px 0 10px; background: #2b2b2b; }
h1 { flex: 1; margin: 0; font-size: 21px; font-weight: 400; line-height: 24px; }
.help { width: 28px; color: #69808d; font-size: 20px; }
.edit { width: 115px; height: 24px; margin-right: 10px; padding: 0; background: none; border: 1px solid #383838; border-radius: 2px; color: #525252; }
.burger { width: 24px; height: 24px; padding: 0; border: 0; border-radius: 2px; background: #69808d; }
.crumbs { display: flex; align-items: center; height: 39px; padding: 4px 0 0 17px; }
.crumbs a { color: #4796c4; }
.crumbs i { margin-left: 7px; font-style: normal; }
.crumbs .current { height: 22px; padding: 1px 6px 0; border: 1px solid #303030; background: #2b2b2b; line-height: 18px; }

/* dashboard */
.dashboard { display: flex; flex-direction: column; gap: 8px; width: 2364px; padding-left: 10px; }
.row { display: flex; gap: 8px; }
.widget { display: flex; flex-direction: column; overflow: hidden; background: #2b2b2b; border: 1px solid #303030; }
h2 { flex: none; height: 32px; margin: 0; padding: 0 10px; font-size: 14px; line-height: 32px; font-weight: 700; color: #dcdcdc; }
.top { height: 272px; }
.w-hosts { width: 779px; }
.stack { display: flex; flex-direction: column; gap: 8px; width: 287px; }
.stack .widget { flex: 1; }
.w-system { width: 878px; }
.w-clock { width: 386px; align-items: center; }
.bottom { height: 482px; }
.left { display: flex; flex-direction: column; gap: 8px; width: 1664px; }
.totals { height: 132px; }
.w-avail { width: 681px; }
.w-sev { width: 975px; }
.w-problems { flex: 1; }
.w-map { width: 674px; }

.thead { display: grid; flex: none; height: 32px; padding-left: 10px; border-bottom: 2px solid #404040; color: #737373; line-height: 30px; }
.trow { display: grid; flex: none; height: 31px; padding-left: 10px; border-bottom: 1px solid #383838; line-height: 30px; }
.hosts-cols { grid-template-columns: 151.500px 163.500px 108px 111px 128px 1fr; }
.sys-cols { grid-template-columns: 399px 108px 1fr; }
.prob-cols { grid-template-columns: 142px 122px 140.500px 461.500px 233px 201px 202px 1fr; }
.sorted { padding-left: 80px; white-space: nowrap; }
.sorted::after { content: ""; display: inline-block; margin-left: 4px; border: 4px solid transparent; border-top: 5px solid #8a8a8a; border-bottom: 0; vertical-align: 1px; }
.green { color: #59db8f; }
.orange { color: #e79e0b; }
.nodata { display: flex; flex: 1; flex-direction: column; align-items: center; justify-content: center; gap: 9px; padding-bottom: 5px; color: #737373; font-size: 16px; line-height: 20px; }
.nodata svg { fill: none; stroke: #737373; stroke-width: 1.2; }
.noperm { margin: 0; padding: 6px 10px 9px; height: 49px; border-bottom: 1px solid #383838; color: #6b6b6b; text-align: center; }
.time { margin-top: 71px; font-size: 80.5px; line-height: 80px; font-weight: 700; }
.city { font-size: 40px; line-height: 58px; }

.tiles { display: flex; flex: 1; }
.tile { display: flex; flex: 1 1 0; flex-direction: column; align-items: center; justify-content: center; color: #f2f2f2; }
.tile b { font-size: 16px; font-weight: 400; line-height: 18px; }
.available { background: #34af67; }
.notavailable { background: #d64e4e; }
.mixed { background: #f1a50b; }
.unknown { background: #737373; }
.disaster { background: #e45959; color: #4b0c0c; }
.high { background: #e97659; color: #52190b; }
.average { background: #ffa059; color: #733100; }
.warning { background: #ffc859; color: #734c00; }
.information { background: #7499ff; color: #00268e; }
.unclassified { background: #97aab3; color: #2f3c43; }

/* map */
.map { position: relative; height: 440px; overflow: hidden; background: #ddd; }
.zoom, .home, .filter, .attrib { position: absolute; }
.zoom { left: 10px; top: 10px; width: 34px; border: 2px solid rgba(0, 0, 0, .22); border-radius: 4px; background: #fff; background-clip: padding-box; }
.zoom span { display: block; height: 30px; }
.zoom span:first-child { height: 31px; border-bottom: 1px solid #ccc; }
.home { left: 10px; top: 85px; display: grid; place-items: center; width: 34px; height: 34px; border: 2px solid rgba(0, 0, 0, .22); border-radius: 4px; background: #fff; background-clip: padding-box; }
.filter { left: 635px; top: 10px; width: 34px; height: 34px; padding: 6px; border: 2px solid rgba(0, 0, 0, .22); border-radius: 4px; background: #fff; background-clip: padding-box; }
.attrib { left: 450px; bottom: 0; width: 230px; height: 16px; padding-left: 5px; background: rgba(255, 255, 255, .8); color: #333; font-size: 11px; line-height: 16px; white-space: nowrap; }
.attrib a { color: #0078a8; }
.lbl { font-family: "Noto Sans", sans-serif; text-anchor: middle; paint-order: stroke; stroke: rgba(255, 255, 255, .65); stroke-width: 5px; stroke-linejoin: round; }
.it { font-style: italic; }
.dark { fill: #222; }
.park { fill: #1d8a2a; }
.lake { fill: #5b8fc4; }
.admin { fill: #9a7297; }
.shield-text { font-size: 29px; fill: #6b4a1f; stroke: none; }
.at { fill: #7c2d2d; }
.shield-p rect { fill: #f6e3c9; stroke: #cfae88; stroke-width: 3; }
.shield-a rect { fill: #f5d3ca; stroke: #d6a698; stroke-width: 3; }
```
